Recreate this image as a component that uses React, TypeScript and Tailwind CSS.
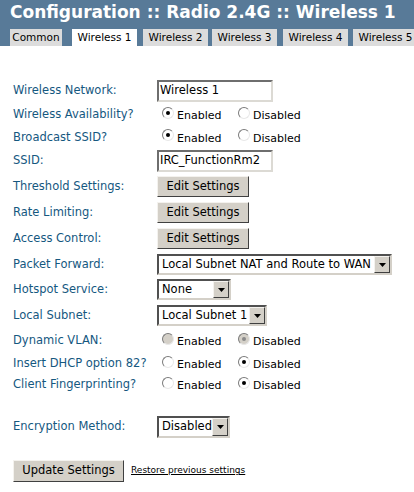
import React from 'react';

const TABS = [
  { name: 'Common', cls: 'w-[52px]' },
  { name: 'Wireless 1', cls: 'w-[65px] ml-[10px] bg-white', active: true },
  { name: 'Wireless 2', cls: 'w-[65px] ml-[6px]' },
  { name: 'Wireless 3', cls: 'w-[65px] ml-[4px]' },
  { name: 'Wireless 4', cls: 'w-[65px] ml-[6px]' },
  { name: 'Wireless 5', cls: 'w-[65px] ml-[5px]' },
];

function TextBox({ value }: { value: string }) {
  return (
    <div className="w-[116px] h-[22px] border-2 border-t-[#6e6e6e] border-l-[#6e6e6e] border-b-[#dcdad4] border-r-[#dcdad4] bg-white flex items-center pl-[1px] text-[11.5px] text-black whitespace-nowrap overflow-hidden">
      {value}
    </div>
  );
}

function Button({ label, cls }: { label: string; cls: string }) {
  return (
    <div
      className={`${cls} flex items-center justify-center bg-[#d4d0c8] border border-t-[#f4f2ee] border-l-[#f4f2ee] border-b-[#404040] border-r-[#404040] text-[11.5px] text-black whitespace-nowrap`}
    >
      {label}
    </div>
  );
}

function Select({ value, cls }: { value: string; cls: string }) {
  return (
    <div
      className={`${cls} h-[21px] flex border-2 border-t-[#505050] border-l-[#505050] border-b-[#d4d0c8] border-r-[#d4d0c8] bg-white`}
    >
      <div className="flex-1 flex items-center pl-[3px] text-[11.5px] text-black whitespace-nowrap overflow-hidden">
        {value}
      </div>
      <div className="w-[16px] bg-[#d4d0c8] border border-t-[#f4f2ee] border-l-[#f4f2ee] border-b-[#404040] border-r-[#404040] flex items-center justify-center">
        <svg width="7" height="4" viewBox="0 0 7 4">
          <path d="M0 0h7L3.5 4z" fill="#000" />
        </svg>
      </div>
    </div>
  );
}

function Radio({ checked, disabled }: { checked?: boolean; disabled?: boolean }) {
  return (
    <span
      className={`relative inline-block w-[12px] h-[12px] mb-[5px] rounded-full border border-t-[#7a7a7a] border-l-[#7a7a7a] border-b-[#e8e8e8] border-r-[#e8e8e8] ${
        disabled ? 'bg-[#d4d0c8]' : 'bg-white'
      }`}
    >
      {checked && (
        <span
          className={`absolute left-[3px] top-[3px] w-[4px] h-[4px] rounded-full ${
            disabled ? 'bg-[#8a8a8a]' : 'bg-black'
          }`}
        />
      )}
    </span>
  );
}

function RadioPair({ on, disabled }: { on: boolean; disabled?: boolean }) {
  return (
    <div className="flex items-center pl-[5px] text-[11px] text-black">
      <div className="flex items-center w-[76px] gap-[3px]">
        <Radio checked={on} disabled={disabled} />
        <span className="mt-[3px]">Enabled</span>
      </div>
      <div className="flex items-center gap-[3px]">
        <Radio checked={!on} disabled={disabled} />
        <span className="mt-[3px]">Disabled</span>
      </div>
    </div>
  );
}

const ROWS: { label: string; h: string; control: React.ReactNode }[] = [
  { label: 'Wireless Network:', h: 'h-[24px]', control: <TextBox value="Wireless 1" /> },
  { label: 'Wireless Availability?', h: 'h-[24px]', control: <RadioPair on /> },
  { label: 'Broadcast SSID?', h: 'h-[21px]', control: <RadioPair on /> },
  { label: 'SSID:', h: 'h-[25px]', control: <TextBox value="IRC_FunctionRm2" /> },
  { label: 'Threshold Settings:', h: 'h-[27px]', control: <Button label="Edit Settings" cls="w-[92px] h-[21px]" /> },
  { label: 'Rate Limiting:', h: 'h-[25px]', control: <Button label="Edit Settings" cls="w-[92px] h-[21px]" /> },
  { label: 'Access Control:', h: 'h-[27px]', control: <Button label="Edit Settings" cls="w-[92px] h-[21px]" /> },
  { label: 'Packet Forward:', h: 'h-[25px]', control: <Select value="Local Subnet NAT and Route to WAN" cls="w-[235px]" /> },
  { label: 'Hotspot Service:', h: 'h-[25px]', control: <Select value="None" cls="w-[74px]" /> },
  { label: 'Local Subnet:', h: 'h-[27px]', control: <Select value="Local Subnet 1" cls="w-[110px]" /> },
  { label: 'Dynamic VLAN:', h: 'h-[24px]', control: <RadioPair on={false} disabled /> },
  { label: 'Insert DHCP option 82?', h: 'h-[22px]', control: <RadioPair on={false} /> },
  { label: 'Client Fingerprinting?', h: 'h-[20px]', control: <RadioPair on={false} /> },
];

export default function App() {
  return (
    <div className="w-[414px] h-[492px] overflow-hidden bg-white font-['DejaVu_Sans',sans-serif]">
      {/* title bar + tabs */}
      <div className="h-[46px] bg-[#587a98] pl-[10px] flex flex-col">
        <h1 className="h-[29px] text-white font-bold text-[17px] leading-[25px] whitespace-nowrap">
          Configuration :: Radio 2.4G :: Wireless 1
        </h1>
        <div className="flex h-[17px] whitespace-nowrap">
          {TABS.map((t) => (
            <div
              key={t.name}
              className={`${t.cls} shrink-0 flex items-center justify-center text-[10.5px] text-black ${
                t.active ? '' : 'bg-[#dcdcdc]'
              }`}
            >
              {t.name}
            </div>
          ))}
        </div>
      </div>

      <div className="pl-[13px] pt-[33px]">
        {ROWS.map((r) => (
          <div key={r.label} className={`${r.h} flex items-center`}>
            <div className="w-[144px] text-[11.5px] text-[#15587f] whitespace-nowrap">{r.label}</div>
            {r.control}
          </div>
        ))}

        <div className="h-[21px]" />
        <div className="h-[22px] flex items-center">
          <div className="w-[144px] text-[11.5px] text-[#15587f] whitespace-nowrap">Encryption Method:</div>
          <Select value="Disabled" cls="w-[73px] h-[22px]" />
        </div>

        <div className="h-[22px] mt-[22px] flex items-center gap-[7px]">
          <Button label="Update Settings" cls="w-[111px] h-[22px]" />
          <a href="#" className="text-[9px] text-black underline whitespace-nowrap">
            Restore previous settings
          </a>
        </div>
      </div>
    </div>
  );
}
